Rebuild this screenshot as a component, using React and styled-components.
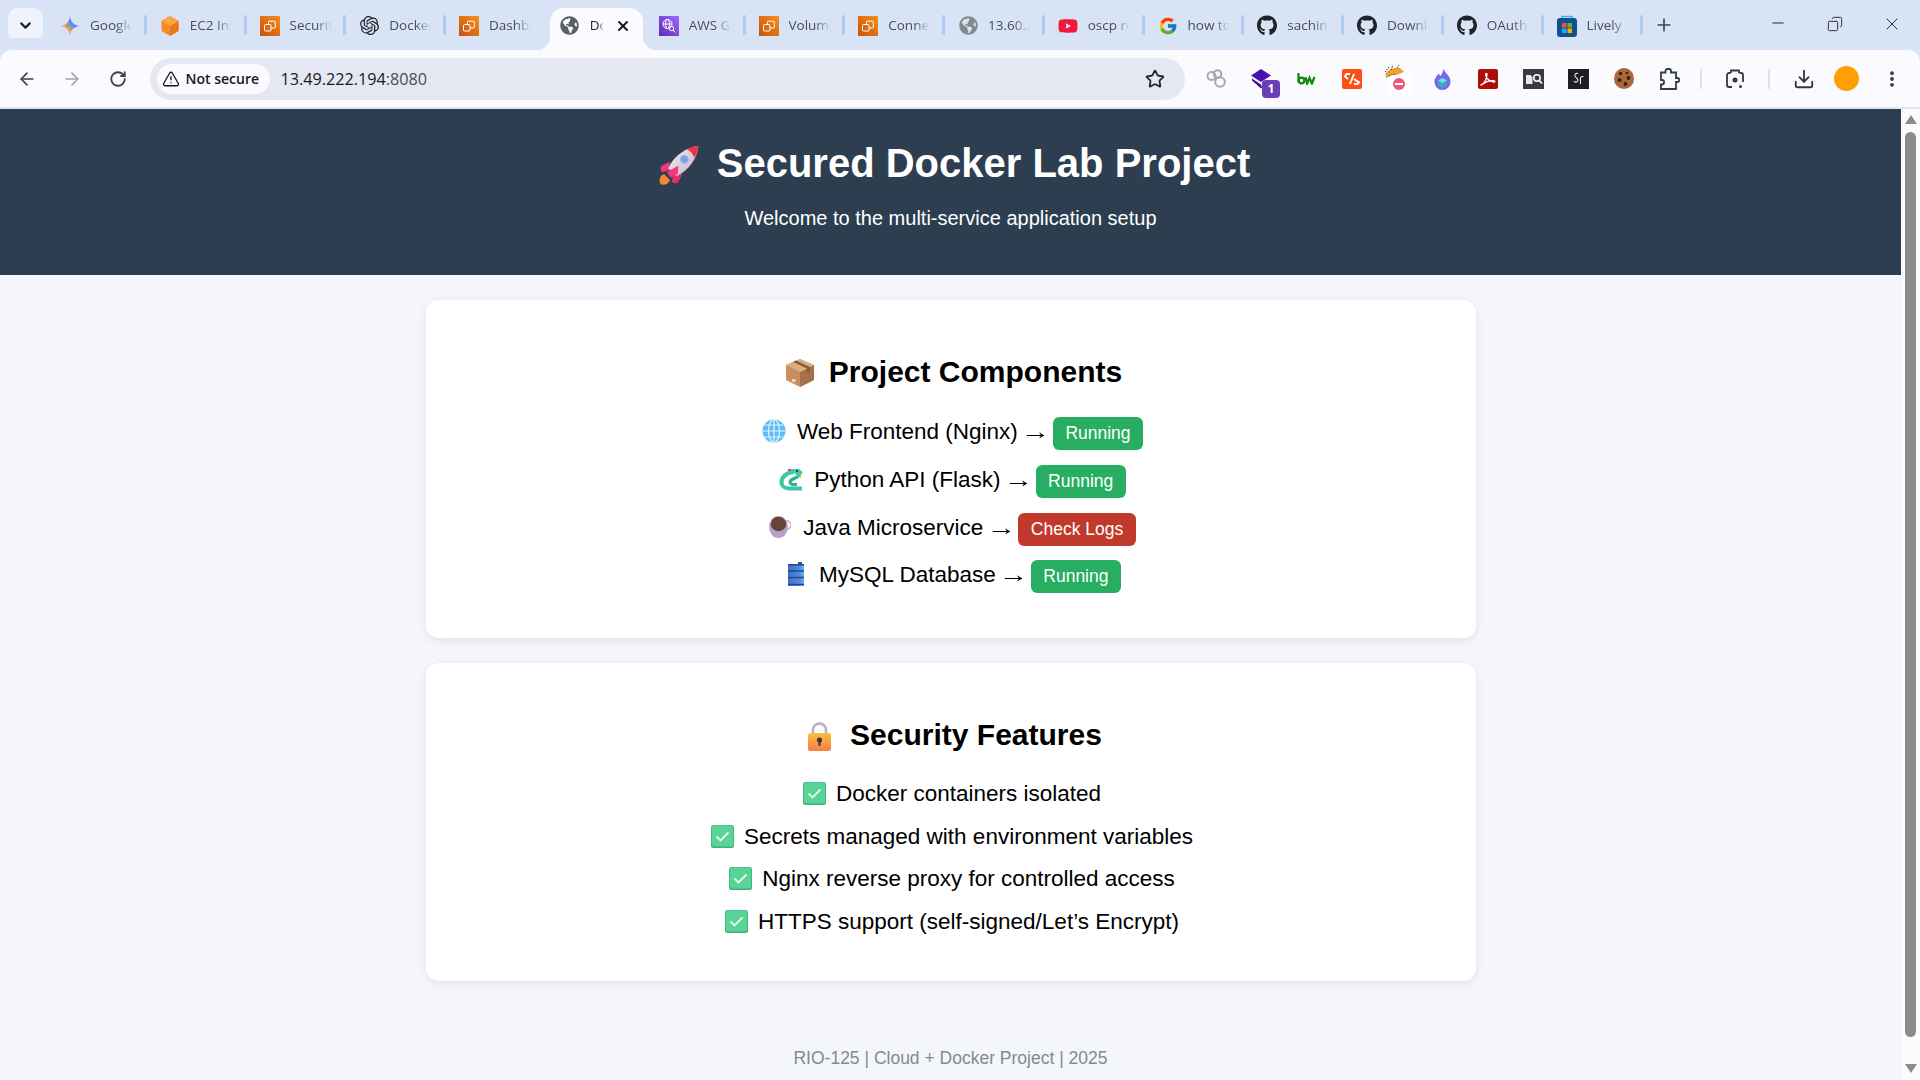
import React from 'react';
import styled, { createGlobalStyle } from 'styled-components';
import {
  ArrowLeft, ArrowRight, RotateCw, Star, TriangleAlert, ChevronDown, X, Plus, Minus,
  Download, EllipsisVertical, Copy,
} from 'lucide-react';
import { FaGithub, FaGlobeAmericas, FaYoutube } from 'react-icons/fa';
import { FcGoogle } from 'react-icons/fc';
import { SiOpenai } from 'react-icons/si';

const GlobalStyle = createGlobalStyle`
  html, body { margin: 0; padding: 0; overflow: hidden; background: #f4f6fb; }
  * { box-sizing: border-box; }
`;

const Frame = styled.div`
  width: 1920px;
  height: 1080px;
  display: flex;
  flex-direction: column;
  overflow: hidden;
  font-family: "Liberation Sans", Arial, sans-serif;
`;

/* browser chrome */
const TabStrip = styled.div`
  height: 50px;
  flex: none;
  display: flex;
  align-items: flex-start;
  padding: 8px 0 0 8px;
  background: #d8e4f6;
`;

const TabSearch = styled.div`
  width: 35px;
  height: 34px;
  margin: 0 3px 0 0;
  border-radius: 10px;
  background: #eef3fc;
  color: #1f2328;
  display: flex;
  align-items: center;
  justify-content: center;
`;

const Tab = styled.div`
  position: relative;
  flex: none;
  width: 99.75px;
  height: 42px;
  padding: 0 0 7px 14px;
  display: flex;
  align-items: center;
  gap: 10px;
  font-family: "Open Sans", sans-serif;
  font-size: 13.5px;
  color: #474c55;
  ${p => !p.$sep ? '' : `
    &::after {
      content: '';
      position: absolute;
      right: -1px;
      top: 7px;
      width: 3px;
      height: 20px;
      border-radius: 2px;
      background: #adcbf6;
    }
  `}
`;

const ActiveTab = styled(Tab)`
  width: 93px;
  margin: 0 2px 0 5px;
  padding: 0 0 7px 10px;
  background: #fbfaff;
  border-radius: 14px 14px 0 0;
  color: #1f2328;
  &::before, &::after {
    content: '';
    position: absolute;
    bottom: 0;
    width: 14px;
    height: 14px;
  }
  &::before {
    left: -14px;
    background: radial-gradient(circle at 0 0, transparent 14px, #fbfaff 14.5px);
  }
  &::after {
    right: -14px;
    background: radial-gradient(circle at 100% 0, transparent 14px, #fbfaff 14.5px);
  }
`;

const TabIcon = styled.span`
  flex: none;
  width: 20px;
  height: 20px;
  display: flex;
  align-items: center;
  justify-content: center;
`;

const TabTitle = styled.span`
  flex: none;
  width: ${p => p.$w || 42}px;
  margin-top: -2px;
  overflow: hidden;
  white-space: nowrap;
  -webkit-mask-image: linear-gradient(to right, #000 62%, transparent 100%);
  mask-image: linear-gradient(to right, #000 62%, transparent 100%);
`;

const TabClose = styled.span`
  margin-left: 1px;
  display: flex;
  color: #17191d;
`;

const NewTab = styled.div`
  margin: 7px 0 0 12px;
  color: #3c4250;
  display: flex;
`;

const WindowControls = styled.div`
  margin: 6px 0 0 auto;
  display: flex;
  color: #23262c;
`;

const WindowButton = styled.div`
  width: 57px;
  display: flex;
  justify-content: center;
`;

const Toolbar = styled.div`
  height: 59px;
  flex: none;
  display: flex;
  align-items: center;
  padding: 0 0 0 4px;
  background: #fbfaff;
  border-bottom: 2px solid #e3e4ee;
  border-radius: 12px 12px 0 0;
  box-shadow: 0 -12px 0 #d8e4f6;
`;

const NavButton = styled.div`
  width: 45.5px;
  display: flex;
  justify-content: center;
  color: ${p => p.$off ? '#a3a5ab' : '#3c4048'};
`;

const Omnibox = styled.div`
  width: 1035px;
  height: 42px;
  margin-left: 9px;
  border-radius: 21px;
  background: #e5e8f3;
  display: flex;
  align-items: center;
  padding: 0 20px 0 7px;
`;

const SecureChip = styled.div`
  width: 113px;
  height: 30px;
  border-radius: 15px;
  background: #fbfaff;
  display: flex;
  align-items: center;
  gap: 6px;
  padding-left: 5px;
  font-family: "Open Sans", sans-serif;
  font-size: 14px;
  font-weight: 600;
  white-space: nowrap;
  color: #17191d;
`;

const Url = styled.div`
  margin-left: 11px;
  flex: 1;
  font-family: "Open Sans", sans-serif;
  font-size: 16.2px;
  color: #17191d;
  span { color: #474c55; }
`;

const ExtensionBar = styled.div`
  display: flex;
  align-items: center;
  margin-left: 9px;
`;

const Ext = styled.div`
  position: relative;
  flex: none;
  width: ${p => p.$w || 45.3}px;
  height: 30px;
  display: flex;
  align-items: center;
  justify-content: center;
`;

const ExtBadge = styled.span`
  position: absolute;
  right: 4px;
  bottom: -4px;
  width: 18px;
  height: 18px;
  border-radius: 4px;
  background: #6a3fb5;
  color: #fff;
  font-family: "Open Sans", sans-serif;
  font-size: 11.5px;
  font-weight: 700;
  display: flex;
  align-items: center;
  justify-content: center;
`;

const ToolSep = styled.div`
  flex: none;
  width: 2px;
  height: 20px;
  background: #d6e3f7;
`;

const Avatar = styled.div`
  width: 25px;
  height: 25px;
  border-radius: 50%;
  background: #ffa000;
`;

/* page */
const Viewport = styled.div`
  flex: 1;
  min-height: 0;
  display: flex;
`;

const Page = styled.main`
  flex: 1;
  min-width: 0;
  background: #f4f6fb;
  color: #000;
  text-align: center;
`;

const Hero = styled.header`
  height: 166px;
  padding-top: 31px;
  background: #2c3e50;
  color: #fff;
`;

const HeroTitle = styled.h1`
  margin: 0;
  font-size: 40px;
  line-height: 46px;
  font-weight: 700;
`;

const HeroSub = styled.p`
  margin: 21px 0 0;
  font-size: 20px;
  line-height: 23px;
`;

const Card = styled.section`
  width: 1050px;
  height: ${p => p.$h}px;
  margin: 25px auto 0;
  padding-top: ${p => p.$top}px;
  background: #fff;
  border-radius: 12.5px;
  box-shadow: 0 2.5px 10px rgba(0, 0, 0, 0.08);
`;

const CardTitle = styled.h2`
  margin: 0 0 ${p => p.$gap}px;
  font-size: 30px;
  line-height: 35px;
  font-weight: 700;
`;

const List = styled.ul`
  list-style: none;
  margin: 0;
  padding: 0;
`;

const ServiceItem = styled.li`
  height: 47.8px;
  font-size: 22.5px;
  line-height: 47px;
`;

const FeatureItem = styled.li`
  height: 42.7px;
  font-size: 22.5px;
  line-height: 42.7px;
`;

const Arrow = styled.span`
  display: inline-block;
  transform: scaleX(1.3);
`;

const Badge = styled.span`
  display: inline-block;
  padding: 5px 12.5px;
  border-radius: 6.25px;
  background: ${p => p.$bad ? '#c0392b' : '#27ae60'};
  color: #fff;
  font-size: 17.5px;
  line-height: 23px;
  vertical-align: 0;
`;

const Emoji = styled.svg`
  width: ${p => p.$size}px;
  height: ${p => p.$size}px;
  margin-left: ${p => p.$left || 0}px;
  margin-right: ${p => p.$gap}px;
  vertical-align: ${p => p.$lift}px;
`;

const Footer = styled.footer`
  margin-top: 66px;
  font-size: 17.5px;
  line-height: 23px;
  color: #7f8c8d;
`;

const Scrollbar = styled.div`
  flex: none;
  width: 19px;
  background: #fbfbfd;
  display: flex;
  flex-direction: column;
  align-items: center;
  padding: 6px 0 7px;
`;

const ArrowUp = styled.div`
  width: 0;
  height: 0;
  border-left: 6.5px solid transparent;
  border-right: 6.5px solid transparent;
  border-bottom: 9px solid #8b8b8b;
`;

const ArrowDown = styled(ArrowUp)`
  border-bottom: 0;
  border-top: 9px solid #8b8b8b;
`;

const Thumb = styled.div`
  width: 11px;
  flex: 1;
  margin: 8px 0 27px;
  border-radius: 6px;
  background: #8b8b8b;
`;

/* little drawings */
const Gemini = () => (
  <svg width="20" height="20" viewBox="0 0 20 20">
    <defs>
      <linearGradient id="gem" x1="0" y1="1" x2="1" y2="0">
        <stop offset="0" stopColor="#e8554e" />
        <stop offset=".35" stopColor="#f3a93c" />
        <stop offset=".6" stopColor="#4e8df5" />
        <stop offset="1" stopColor="#7c7bf0" />
      </linearGradient>
    </defs>
    <path d="M10 0C10.6 6 14 9.4 20 10 14 10.6 10.6 14 10 20 9.4 14 6 10.6 0 10 6 9.4 9.4 6 10 0Z" fill="url(#gem)" />
  </svg>
);

const Ec2 = () => (
  <svg width="20" height="20" viewBox="0 0 20 20">
    <path d="M10 0 18.5 5v10L10 20 1.5 15V5Z" fill="#f58a26" />
    <path d="M10 10 18.5 5v10L10 20Z" fill="#e9781a" />
    <path d="M10 0 18.5 5 10 10 1.5 5Z" fill="#fba544" />
  </svg>
);

const AwsSquare = () => (
  <svg width="20" height="20" viewBox="0 0 20 20">
    <defs>
      <linearGradient id="aws" x1="0" y1="1" x2="1" y2="0">
        <stop offset="0" stopColor="#c8510b" />
        <stop offset="1" stopColor="#f68f1e" />
      </linearGradient>
    </defs>
    <rect width="20" height="20" fill="url(#aws)" />
    <g fill="none" stroke="#fff" strokeWidth="1">
      <rect x="4.5" y="8.5" width="6.5" height="6.5" rx="1" />
      <path d="M8.5 8.5V6.2a1 1 0 0 1 1-1h4.8a1 1 0 0 1 1 1V11a1 1 0 0 1-1 1H11" />
    </g>
  </svg>
);

const AwsSearch = () => (
  <svg width="20" height="20" viewBox="0 0 20 20">
    <defs>
      <linearGradient id="awsp" x1="0" y1="1" x2="1" y2="0">
        <stop offset="0" stopColor="#5a30b5" />
        <stop offset="1" stopColor="#a166ff" />
      </linearGradient>
    </defs>
    <rect width="20" height="20" fill="url(#awsp)" />
    <g fill="none" stroke="#fff" strokeWidth="1">
      <circle cx="8.5" cy="8" r="4.5" />
      <ellipse cx="8.5" cy="8" rx="2" ry="4.5" />
      <path d="M4 8h9" />
      <circle cx="12.5" cy="12.5" r="2.2" />
      <path d="M14 14l2.5 2.5" />
    </g>
  </svg>
);

const Lively = () => (
  <svg width="20" height="22" viewBox="0 0 20 22">
    <path d="M5 3V1.5h10V3" fill="none" stroke="#2fb6ee" strokeWidth="1.5" />
    <rect y="3" width="20" height="19" rx="3" fill="#12508f" />
    <rect x="5" y="8" width="4.5" height="4.5" fill="#ee5a24" />
    <rect x="10.5" y="8" width="4.5" height="4.5" fill="#6ab42d" />
    <rect x="5" y="13.5" width="4.5" height="4.5" fill="#27a7e8" />
    <rect x="10.5" y="13.5" width="4.5" height="4.5" fill="#f7b500" />
  </svg>
);

const RingsExt = () => (
  <svg width="20" height="19" viewBox="0 0 20 19" fill="none" stroke="#a9a9ad" strokeWidth="2">
    <circle cx="5.5" cy="7" r="4" />
    <circle cx="11.5" cy="5" r="3.8" />
    <circle cx="14" cy="13" r="4.8" />
  </svg>
);

const StackExt = () => (
  <svg width="20" height="20" viewBox="0 0 20 20">
    <path d="M10 0 20 6.500 10 13 0 6.500Z" fill="#4a12b0" />
    <path d="M1 9.500l9 6 1 3-1 1-9-8Z" fill="#3a0d96" />
  </svg>
);

const BwExt = () => (
  <svg width="19" height="12" viewBox="0 0 19 12" fill="none" stroke="#148a10" strokeWidth="2.300">
    <path d="M1.500 0v9" />
    <circle cx="4.500" cy="7.500" r="2.800" />
    <path d="M8.500 4l1.600 6.500L12.500 5l2.400 5.500L17.500 4" />
  </svg>
);

const CodeExt = () => (
  <svg width="20" height="20" viewBox="0 0 20 20">
    <rect width="20" height="20" rx="2" fill="#fb4f14" />
    <g fill="none" stroke="#fff" strokeWidth="2">
      <path d="M8 5H4.500L3 7.500 6 10" />
      <path d="M12 5 8 15" />
      <path d="M12 10l5 3.500-1.500 1.500H12" />
    </g>
  </svg>
);

const TigerExt = () => (
  <svg width="28" height="29" viewBox="0 0 28 29">
    <path d="M2 11C4 6 10 3 17 4l4 4-8 3-5 2Z" fill="#f0a030" />
    <path d="M2 8l4-5M8 6l2-5M14 4l2-3M3 13l9-3" stroke="#4a3a22" strokeWidth="1" strokeDasharray="1.500 1" fill="none" />
    <rect x="6" y="11" width="22" height="18" rx="4" fill="#fff" />
    <circle cx="16" cy="20" r="6" fill="#f2557c" />
    <rect x="12" y="19" width="8" height="2" fill="#fff" />
  </svg>
);

const FlameExt = () => (
  <svg width="17" height="22" viewBox="0 0 17 22">
    <path d="M9.500 0C10 5 16.500 7 16.500 14a8 8 0 0 1-16 0C.5 10 3 8 4.500 5.500c1 1.500 1.500 2.500 2.500 2.500 1-2.500 2.500-5 2.500-8Z" fill="#7d63ef" />
    <path d="M8.500 10 13 12.500v5L8.500 20 4 17.500v-5Z" fill="#3ea6c4" />
    <path d="M8.500 10 13 12.500 8.500 15 4 12.500Z" fill="#72e0d8" />
  </svg>
);

const AcrobatExt = () => (
  <svg width="20" height="20" viewBox="0 0 20 20">
    <rect width="20" height="20" rx="2" fill="#ab0f0a" />
    <path d="M3 16c3-1.500 5.500-6 6-10 .2-2-1.500-2-1.300 0 .5 4 4.500 6.500 8 7 1.500.2 1.500-1.300 0-1.300-3.500-.2-8 1-10.500 3-1 .8-2 1.500-2.200 1.300Z" fill="none" stroke="#fff" strokeWidth="1.300" />
  </svg>
);

const DocSearchExt = () => (
  <svg width="21" height="20" viewBox="0 0 21 20">
    <rect width="21" height="20" fill="#3a3a3c" />
    <path d="M3 6h4.500l2 2v7H3Z" fill="#e8e8e8" />
    <circle cx="14" cy="9" r="3.200" fill="none" stroke="#fff" strokeWidth="1.500" />
    <path d="M16.300 11.500l2.700 3" stroke="#fff" strokeWidth="1.700" />
  </svg>
);

const ScriptExt = () => (
  <svg width="21" height="20" viewBox="0 0 21 20">
    <rect width="21" height="20" fill="#1c2026" />
    <path d="M10 4.500C7.500 4 6 5.500 7.200 7.500S11 10 9.800 12 6.500 13 6 12" fill="none" stroke="#e8e8e8" strokeWidth="1.100" />
    <path d="M12.500 15V9c0-1.300 1.300-1.800 3-1.300" fill="none" stroke="#e8e8e8" strokeWidth="1.100" />
  </svg>
);

const CookieExt = () => (
  <svg width="20" height="21" viewBox="0 0 20 21">
    <ellipse cx="10" cy="10.500" rx="10" ry="10.500" fill="#a8683c" />
    <g fill="#33201a">
      <circle cx="6.500" cy="5.500" r="1.700" />
      <circle cx="13" cy="5" r="1.300" />
      <circle cx="14.500" cy="10" r="1.900" />
      <circle cx="5.500" cy="12" r="2" />
      <circle cx="11.500" cy="16" r="1.900" />
    </g>
  </svg>
);

const PuzzleExt = () => (
  <svg width="21" height="22" viewBox="0 0 21 22" fill="none" stroke="#2f3a4a" strokeWidth="1.800">
    <path d="M2 4.500h4.500V3a2 2 0 0 1 2-2h1.500a2 2 0 0 1 2 2v1.500H17v5.500h1.500a1.800 2 0 0 1 0 4H17V21H2v-4.500h1a1.800 2 0 0 0 0-4.500H2Z" />
  </svg>
);

const CaptureExt = () => (
  <svg width="18" height="20" viewBox="0 0 18 20" fill="none" stroke="#323843" strokeWidth="1.800">
    <path d="M4.500 4H3a2 2 0 0 0-2 2v10a2 2 0 0 0 2 2h3M13.500 4H15a2 2 0 0 1 2 2v7" />
    <path d="M5 4V1.500h8V4" />
    <circle cx="9" cy="11" r="2.500" fill="#323843" stroke="none" />
    <circle cx="14.500" cy="17.500" r="1.500" fill="#323843" stroke="none" />
  </svg>
);

const Rocket = () => (
  <Emoji $size={40} $left={8} $gap={18} $lift={-8} viewBox="0 0 120 120">
    <defs>
      <linearGradient id="rk" x1="0" y1="0" x2="1" y2="1">
        <stop offset="0" stopColor="#f6f2f6" />
        <stop offset="1" stopColor="#c2aec2" />
      </linearGradient>
    </defs>
    <path d="M4 118C-2 102 4 92 15 87l18 18c-4 11-15 17-29 13Z" fill="#f08a2c" />
    <path d="M32 50 6 64c-2 8 0 14 3 18l22-6Z" fill="#f0387a" />
    <path d="M70 88 56 114c-8 2-14-1-18-4l6-24Z" fill="#e0306e" />
    <path d="M118 3C88 5 44 30 28 70l24 24c38-18 64-56 66-91Z" fill="url(#rk)" />
    <path d="M118 3C105 4 92 8 84 13c10 5 17 13 22 25 7-11 12-24 12-35Z" fill="#f0303f" />
    <path d="M22 82 58 62l-2 26-20 10Z" fill="#f0387a" />
    <circle cx="76" cy="43" r="13" fill="#a5aecb" />
    <circle cx="76" cy="43" r="9" fill="#5fa8f5" />
  </Emoji>
);

const Box = () => (
  <Emoji $size={30} $left={6} $gap={14} $lift={-6} viewBox="0 0 30 30">
    <path d="M15 1 29 7v15L15 29 1 22V7Z" fill="#c98e5f" />
    <path d="M15 14 29 7v15L15 29Z" fill="#a8704a" />
    <path d="M15 1 29 7 15 14 1 7Z" fill="#dcae83" />
    <path d="M8 4 22 10.500v5l3-1.500V9L11 2.500Z" fill="#8a5a3a" />
    <rect x="7" y="21" width="3.500" height="3" fill="#efd9c4" />
  </Emoji>
);

const GlobeEmoji = () => (
  <Emoji $size={24} $left={4} $gap={11} $lift={-4} viewBox="0 0 24 24">
    <circle cx="12" cy="12" r="11.500" fill="#5cbdf6" />
    <g fill="none" stroke="#dff3ff" strokeWidth="1.200">
      <ellipse cx="12" cy="12" rx="5.500" ry="11.500" />
      <path d="M12 .5v23M.5 12h23M2.500 6h19M2.500 18h19" />
    </g>
  </Emoji>
);

const Snake = () => (
  <Emoji $size={24} $left={4} $gap={11} $lift={-4} viewBox="0 0 24 24">
    <path d="M15 5C8 5 2.500 10 2.500 15c0 4.500 4 6.500 8 6.500H23" fill="none" stroke="#3cc5a6" strokeWidth="4" />
    <path d="M20 7c0 5-9 4-9 8 0 1.500 1.500 2.500 4 2.500h3" fill="none" stroke="#2fb096" strokeWidth="3" />
    <path d="M12 2h8l3.500 3-2 5H18l-2-4h-4Z" fill="#3fce9c" />
    <path d="M9 2h3v2H9Z" fill="#e8436a" />
    <circle cx="18" cy="4" r="1" fill="#123" />
    <path d="M22 7l-1 6" stroke="#e6dc46" strokeWidth="1.400" strokeDasharray="1.500 1.500" />
  </Emoji>
);

const Cup = () => (
  <Emoji $size={22} $left={4} $gap={12} $lift={-3} viewBox="0 0 22 22">
    <path d="M15 5h3a3.500 3.500 0 0 1 0 8h-3" fill="none" stroke="#c9bdd4" strokeWidth="1.800" />
    <ellipse cx="9.500" cy="11" rx="9.500" ry="11" fill="#b3a4c6" />
    <ellipse cx="9.500" cy="8" rx="7.800" ry="7.200" fill="#6a4238" />
  </Emoji>
);

const Barrel = () => (
  <Emoji $size={24} $left={4} $gap={11} $lift={-4} viewBox="0 0 24 24">
    <defs>
      <linearGradient id="bar" x1="0" y1="0" x2="1" y2="0">
        <stop offset="0" stopColor="#3f6fc8" />
        <stop offset=".7" stopColor="#4d8ee0" />
        <stop offset="1" stopColor="#62b4f4" />
      </linearGradient>
    </defs>
    <rect x="4" y="2" width="16" height="22" rx="1" fill="url(#bar)" />
    <path d="M4 2.800h16M4 9h16M4 15.500h16M4 22.500h16" stroke="#2a4394" strokeWidth="1.400" />
    <rect x="14" y="0" width="4" height="2" fill="#4a5060" />
  </Emoji>
);

const Lock = () => (
  <Emoji $size={29} $left={6} $gap={16} $lift={-6} viewBox="0 0 29 29">
    <defs>
      <linearGradient id="lk" x1="0" y1="0" x2="0" y2="1">
        <stop offset="0" stopColor="#fbbf3c" />
        <stop offset="1" stopColor="#f67c46" />
      </linearGradient>
    </defs>
    <path d="M8 13V8a6.500 6.500 0 0 1 13 0v5" fill="none" stroke="#b8aec6" strokeWidth="2.600" />
    <rect x="3" y="11" width="23" height="18" rx="2.500" fill="url(#lk)" />
    <circle cx="14.500" cy="18" r="2.600" fill="#3d3640" />
    <rect x="13.400" y="18" width="2.200" height="6" rx="1" fill="#3d3640" />
  </Emoji>
);

const Check = () => (
  <Emoji $size={23} $left={3} $gap={10} $lift={-4} viewBox="0 0 23 23">
    <rect width="23" height="23" rx="2.500" fill="#3eb27e" />
    <rect x=".8" y=".5" width="21.400" height="21" rx="2" fill="#58d497" />
    <path d="M5.500 11.500l4 4 8-8" fill="none" stroke="#e8f8ee" strokeWidth="1.800" />
  </Emoji>
);

const GlobeGrey = ({ dark }) => <FaGlobeAmericas size={19} color={dark ? '#5a5e66' : '#85888e'} />;
const Hub = () => <FaGithub size={21} color="#1f2328" />;

const tabs = [
  { icon: <Gemini />, title: 'Google' },
  { icon: <Ec2 />, title: 'EC2 Instance' },
  { icon: <AwsSquare />, title: 'Security' },
  { icon: <SiOpenai size={19} color="#1f2328" />, title: 'Docker' },
  { icon: <AwsSquare />, title: 'Dashboard', nosep: true },
  { active: true },
  { icon: <AwsSearch />, title: 'AWS Global' },
  { icon: <AwsSquare />, title: 'Volumes' },
  { icon: <AwsSquare />, title: 'Connect' },
  { icon: <GlobeGrey />, title: '13.60.24' },
  { icon: <FaYoutube size={22} color="#f5183d" />, title: 'oscp roadmap' },
  { icon: <FcGoogle size={20} />, title: 'how to' },
  { icon: <Hub />, title: 'sachin' },
  { icon: <Hub />, title: 'Download' },
  { icon: <Hub />, title: 'OAuth' },
  { icon: <Lively />, title: 'Lively', w: 40 },
];

const services = [
  { icon: <GlobeEmoji />, name: 'Web Frontend (Nginx)', status: 'Running' },
  { icon: <Snake />, name: 'Python API (Flask)', status: 'Running' },
  { icon: <Cup />, name: 'Java Microservice', status: 'Check Logs', bad: true },
  { icon: <Barrel />, name: 'MySQL Database', status: 'Running' },
];

const features = [
  'Docker containers isolated',
  'Secrets managed with environment variables',
  'Nginx reverse proxy for controlled access',
  'HTTPS support (self-signed/Let’s Encrypt)',
];

export default function App() {
  return (
    <Frame>
      <GlobalStyle />
      <TabStrip>
        <TabSearch><ChevronDown size={17} strokeWidth={3} /></TabSearch>
        {tabs.map((t, i) => t.active ? (
          <ActiveTab key={i}>
            <TabIcon><GlobeGrey dark /></TabIcon>
            <TabTitle $w={14}>Docker</TabTitle>
            <TabClose><X size={16} strokeWidth={3} /></TabClose>
          </ActiveTab>
        ) : (
          <Tab key={i} $sep={!t.nosep}>
            <TabIcon>{t.icon}</TabIcon>
            <TabTitle $w={t.w}>{t.title}</TabTitle>
          </Tab>
        ))}
        <NewTab><Plus size={20} strokeWidth={2} /></NewTab>
        <WindowControls>
          <WindowButton><Minus size={18} strokeWidth={1.3} /></WindowButton>
          <WindowButton><Copy size={16} strokeWidth={1.4} style={{ transform: 'scaleX(-1)', marginTop: 2 }} /></WindowButton>
          <WindowButton><X size={20} strokeWidth={1.2} /></WindowButton>
        </WindowControls>
      </TabStrip>

      <Toolbar>
        <NavButton><ArrowLeft size={20} /></NavButton>
        <NavButton $off><ArrowRight size={20} /></NavButton>
        <NavButton><RotateCw size={18} strokeWidth={2.4} /></NavButton>
        <Omnibox>
          <SecureChip><TriangleAlert size={18} strokeWidth={1.8} />Not secure</SecureChip>
          <Url>13.49.222.194<span>:8080</span></Url>
          <Star size={20} color="#23262c" strokeWidth={2.2} />
        </Omnibox>
        <ExtensionBar>
          <Ext><RingsExt /></Ext>
          <Ext><StackExt /><ExtBadge>1</ExtBadge></Ext>
          <Ext><BwExt /></Ext>
          <Ext><CodeExt /></Ext>
          <Ext><TigerExt /></Ext>
          <Ext><FlameExt /></Ext>
          <Ext><AcrobatExt /></Ext>
          <Ext><DocSearchExt /></Ext>
          <Ext><ScriptExt /></Ext>
          <Ext><CookieExt /></Ext>
          <Ext><PuzzleExt /></Ext>
          <Ext $w={19}><ToolSep /></Ext>
          <Ext $w={48}><CaptureExt /></Ext>
          <Ext $w={20}><ToolSep /></Ext>
          <Ext $w={50}><Download size={22} color="#323843" /></Ext>
          <Ext $w={36}><Avatar /></Ext>
          <Ext $w={54}><EllipsisVertical size={20} color="#323843" strokeWidth={2.6} /></Ext>
        </ExtensionBar>
      </Toolbar>

      <Viewport>
        <Page>
          <Hero>
            <HeroTitle><Rocket />Secured Docker Lab Project</HeroTitle>
            <HeroSub>Welcome to the multi-service application setup</HeroSub>
          </Hero>

          <Card $h={338} $top={54}>
            <CardTitle $gap={19}><Box />Project Components</CardTitle>
            <List>
              {services.map(s => (
                <ServiceItem key={s.name}>
                  {s.icon}{s.name} <Arrow>→</Arrow> <Badge $bad={s.bad}>{s.status}</Badge>
                </ServiceItem>
              ))}
            </List>
          </Card>

          <Card $h={318} $top={54}>
            <CardTitle $gap={21}><Lock />Security Features</CardTitle>
            <List>
              {features.map(f => (
                <FeatureItem key={f}><Check />{f}</FeatureItem>
              ))}
            </List>
          </Card>

          <Footer>RIO-125 | Cloud + Docker Project | 2025</Footer>
        </Page>
        <Scrollbar>
          <ArrowUp />
          <Thumb />
          <ArrowDown />
        </Scrollbar>
      </Viewport>
    </Frame>
  );
}
